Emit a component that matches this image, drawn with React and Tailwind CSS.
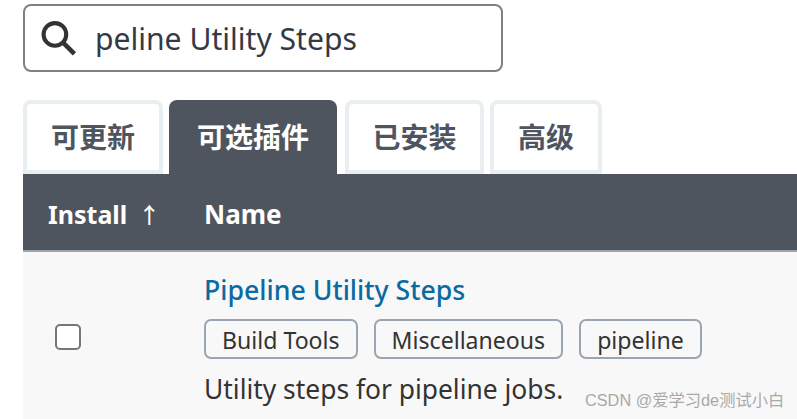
import React from "react";

const Tag = ({ children }) => (
  <span className="flex h-[40px] items-center rounded-[7px] border-2 border-[#9aa5af] px-[16px] pt-[2px] text-[23.1px] text-[#333333]">
    {children}
  </span>
);

const Tab = ({ children, active, className }) => (
  <div
    className={
      active
        ? "flex h-[74px] items-center justify-center rounded-t-[8px] bg-[#4f555f] text-[28px] font-bold text-white " + className
        : "flex h-[74px] items-center justify-center rounded-t-[8px] border-4 border-[#e9eef1] bg-white text-[28px] font-bold text-[#4f555f] " + className
    }
  >
    {children}
  </div>
);

export default function App() {
  return (
    <div className="relative h-[419px] w-[797px] overflow-hidden bg-white pl-[23px] pt-[4px] font-['Noto_Sans','Noto_Sans_CJK_SC',sans-serif]">
      {/* search box */}
      <div className="flex h-[68px] w-[480px] items-center rounded-[8px] border-2 border-[#808080] pl-[15px]">
        <svg width="37" height="37" viewBox="0 0 36 36" fill="none" stroke="#333333" strokeWidth="4">
          <circle cx="14.5" cy="14" r="11" />
          <path d="M22.5 22 L33.5 33" strokeWidth="4.5" />
        </svg>
        <span className="ml-[18px] pt-[2px] text-[30.1px] text-[#333a46]">peline Utility Steps</span>
      </div>

      {/* tabs */}
      <div className="mt-[28px] flex">
        <Tab className="w-[140px]">可更新</Tab>
        <Tab active className="ml-[6px] w-[168px]">可选插件</Tab>
        <Tab className="ml-[8px] w-[139px]">已安装</Tab>
        <Tab className="ml-[6px] w-[112px]">高级</Tab>
      </div>

      {/* table head */}
      <div className="flex h-[78px] items-center border-b-2 border-[#9aa5af] bg-[#4f555f] pt-[5px] text-[26px] font-bold text-white">
        <div className="flex w-[181px] items-center pl-[25px]">
          <span className="text-[25px]">Install</span>
          <span className="ml-[11px] text-[22px] font-medium">↑</span>
        </div>
        <div>Name</div>
      </div>

      {/* plugin row */}
      <div className="flex h-[167px] bg-[#f8f8f8]">
        <div className="w-[181px] pl-[32px] pt-[72px]">
          <div className="h-[26px] w-[26px] rounded-[5px] border-2 border-[#777777] bg-white" />
        </div>
        <div className="pt-[20px]">
          <div className="text-[26.7px] leading-[36px] font-medium text-[#0b6aa2]">Pipeline Utility Steps</div>
          <div className="mt-[11px] flex gap-[16px]">
            <Tag>Build Tools</Tag>
            <Tag>Miscellaneous</Tag>
            <Tag>pipeline</Tag>
          </div>
          <div className="mt-[12px] text-[26.4px] leading-[36px] text-[#333333]">Utility steps for pipeline jobs.</div>
        </div>
      </div>

      {/* watermark */}
      <div className="absolute left-[585px] top-[389px] text-[16.3px] leading-[22px] text-[#a8a8a8] font-['Liberation_Sans','Noto_Sans_CJK_SC',sans-serif]">
        CSDN @爱学习de测试小白
      </div>
    </div>
  );
}
